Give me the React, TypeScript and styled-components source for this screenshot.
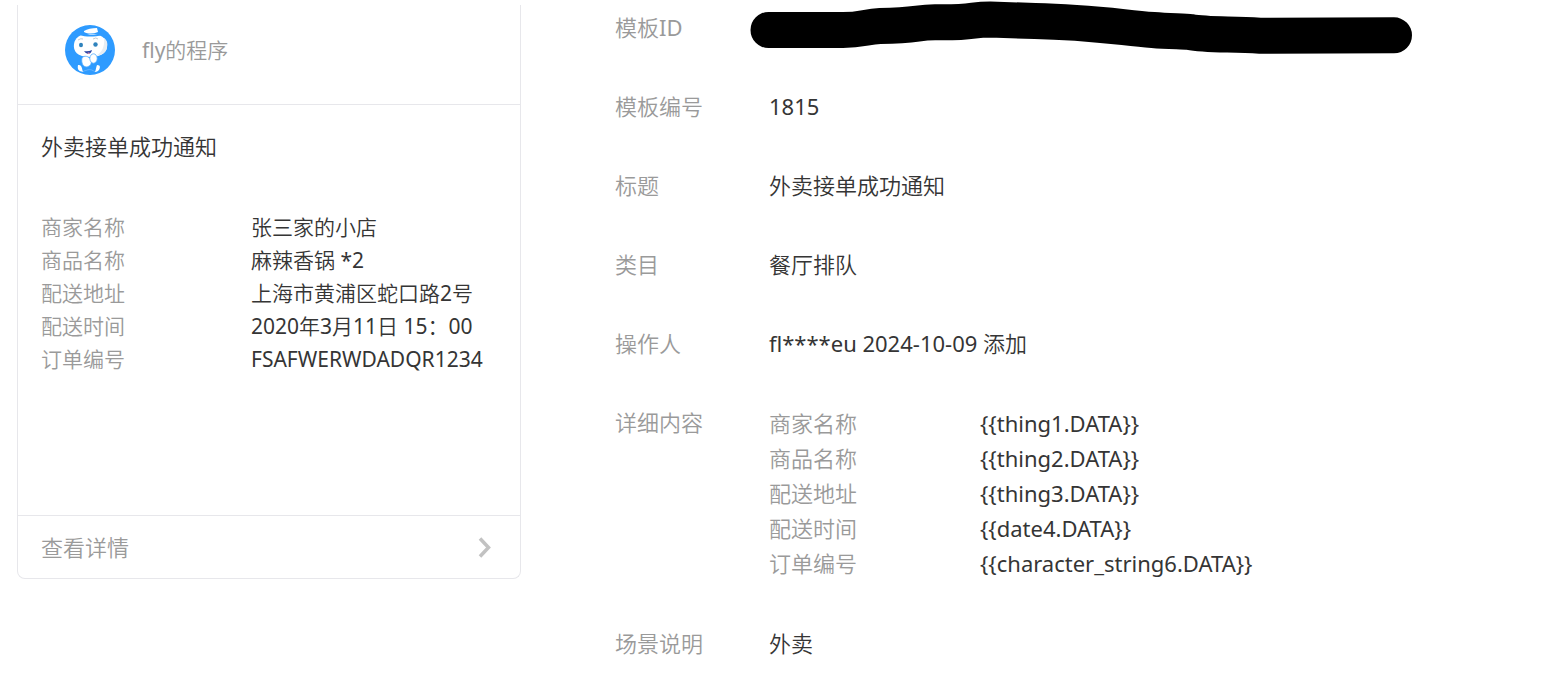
import React from "react";
import styled, { createGlobalStyle } from "styled-components";

const GlobalStyle = createGlobalStyle`
  *, *::before, *::after { box-sizing: border-box; }
  body {
    margin: 0;
    background: #fff;
    color: #353535;
    font-family: "Noto Sans", "Noto Sans CJK SC DemiLight", "Noto Sans CJK SC", sans-serif;
    font-weight: 400;
    font-size: 22px;
    line-height: 35px;
  }
`;

const Page = styled.main`
  display: flex;
  align-items: flex-start;
  gap: 94px;
  padding: 5px 17px 24px;
`;

const Card = styled.section`
  flex: 0 1 504px;
  display: flex;
  flex-direction: column;
  min-height: 574px;
  border: 1px solid #e7e7eb;
  border-top: 0;
  border-radius: 0 0 8px 8px;
`;

const CardHeader = styled.header`
  display: flex;
  align-items: center;
  gap: 27px;
  padding: 20px 47px 29px;
  border-bottom: 1px solid #e7e7eb;
  color: #9a9a9a;
  font-size: 21px;
`;

const Avatar = styled.svg`
  flex: none;
  width: 50px;
  height: 50px;
`;

const CardBody = styled.div`
  flex: 1;
  padding: 24px 23px;
`;

const CardTitle = styled.h2`
  margin: 0 0 47px;
  font-size: 22px;
  font-weight: inherit;
`;

const FieldList = styled.dl<{ $labelWidth: number; $compact?: boolean }>`
  display: grid;
  grid-template-columns: ${(p) => p.$labelWidth}px 1fr;
  margin: 0;
  padding: ${(p) => (p.$compact ? 0 : 1)}px 0;
  font-size: ${(p) => (p.$compact ? 21 : 22)}px;
  line-height: ${(p) => (p.$compact ? 33 : 35)}px;
`;

const Label = styled.dt`
  color: #9a9a9a;
`;

const Value = styled.dd`
  position: relative;
  margin: 0;
  white-space: nowrap;
`;

const CardLink = styled.a`
  display: flex;
  align-items: center;
  justify-content: space-between;
  height: 63px;
  padding: 0 28px 0 23px;
  border-top: 1px solid #e7e7eb;
  color: #9a9a9a;
  text-decoration: none;
`;

const Arrow = styled.svg`
  width: 14px;
  height: 22px;
`;

const Details = styled.dl`
  flex: 1;
  display: grid;
  grid-template-columns: 154px 1fr;
  row-gap: 44px;
  align-content: start;
  margin: 0;
  padding-top: 5px;
`;

const Redaction = styled.svg`
  position: absolute;
  left: -19px;
  top: -10px;
  width: 664px;
  height: 56px;
`;

const cardFields = [
  ["商家名称", "张三家的小店"],
  ["商品名称", "麻辣香锅 *2"],
  ["配送地址", "上海市黄浦区蛇口路2号"],
  ["配送时间", "2020年3月11日 15：00"],
  ["订单编号", "FSAFWERWDADQR1234"],
];

const templateFields = [
  ["商家名称", "{{thing1.DATA}}"],
  ["商品名称", "{{thing2.DATA}}"],
  ["配送地址", "{{thing3.DATA}}"],
  ["配送时间", "{{date4.DATA}}"],
  ["订单编号", "{{character_string6.DATA}}"],
];

const summary = [
  ["模板编号", "1815"],
  ["标题", "外卖接单成功通知"],
  ["类目", "餐厅排队"],
  ["操作人", "fl****eu 2024-10-09 添加"],
];

function Fields({ rows }: { rows: string[][] }) {
  return (
    <>
      {rows.map(([label, value]) => (
        <React.Fragment key={label}>
          <Label>{label}</Label>
          <Value>{value}</Value>
        </React.Fragment>
      ))}
    </>
  );
}

function Mascot() {
  return (
    <Avatar viewBox="0 0 50 50" aria-hidden="true">
      <circle cx="25" cy="25" r="25" fill="#2e9bff" />
      <path d="M9 19C10 13 14 9 25 9s16 4 17 10c1 7-4 13-17 13S8 26 9 19Z" fill="#fff" />
      <path d="M39 13c3 2 4 5 3 9 0 4-4 8-11 9 6-4 9-9 8-18Z" fill="#e6edf3" />
      <path d="M15 6c5 4 16 5 22 2v2c-7 2-17 2-22 0Z" fill="#2e9bff" />
      <path d="M19 6c3-2 8-3 13-3l1 4c-5 2-10 2-14 0Z" fill="#fff" />
      <path d="M13 15q3-2 5-1M28 14q3-2 5 0" fill="none" stroke="#c5cbd1" />
      <ellipse cx="16" cy="20" rx="2" ry="2.2" fill="#2f83bd" />
      <ellipse cx="30.5" cy="19.5" rx="2.2" ry="2.2" fill="#2f83bd" />
      <path d="M19 26q4 1 8-1-1 4-4 4-3-1-4-3Z" fill="#2944a5" />
      <path d="M22 28q2-1 3 0l-1 1Z" fill="#ff9bad" />
      <path d="M17 33c2-3 7-2 9 2 1 4-1 6-4 7-4 0-6-4-5-9Z" fill="#fff" stroke="#56adff" strokeWidth=".8" />
      <ellipse cx="28.5" cy="33.500" rx="3.700" ry="4.700" fill="#fff" stroke="#56adff" strokeWidth=".8" />
      <path d="M14 40c3 0 3 4 4 7-4-1-6-2-5-7ZM32 40c4 0 3 3 2 5-2 2-4 2-4 2 1-2 1-5 2-7Z" fill="#fff" />
      <path d="M18 47c1-2 3-1 4-2 3-1 6 0 8 2" fill="none" stroke="#76baff" strokeWidth=".7" />
    </Avatar>
  );
}

export default function App() {
  return (
    <>
      <GlobalStyle />
      <Page>
        <Card>
          <CardHeader>
            <Mascot />
            <span>fly的程序</span>
          </CardHeader>
          <CardBody>
            <CardTitle>外卖接单成功通知</CardTitle>
            <FieldList $labelWidth={210} $compact>
              <Fields rows={cardFields} />
            </FieldList>
          </CardBody>
          <CardLink href="#">
            <span>查看详情</span>
            <Arrow viewBox="0 0 14 22" aria-hidden="true">
              <path d="M2 2.500L10.500 11.500L2 20.500" fill="none" stroke="#c2c2c2" strokeWidth="3.500" />
            </Arrow>
          </CardLink>
        </Card>

        <Details>
          <Label>模板ID</Label>
          <Value>
            <Redaction viewBox="750 0 664 56" aria-hidden="true">
              <path
                d="M768.500 30H843C862 30 866 26.500 880 26C920 25 915 22.500 935 22.300C975 23 970 19.500 990 19.500L1035 21C1085 22 1110 26 1153 30C1170 31.500 1184 31 1190 32C1205 35 1225 34 1260 35.700C1290 36 1320 35.300 1394 35.300"
                fill="none"
                stroke="#000"
                strokeWidth="36"
                strokeLinecap="round"
                strokeLinejoin="round"
              />
            </Redaction>
          </Value>
          <Fields rows={summary} />
          <Label>详细内容</Label>
          <Value>
            <FieldList $labelWidth={211}>
              <Fields rows={templateFields} />
            </FieldList>
          </Value>
          <Label>场景说明</Label>
          <Value>外卖</Value>
        </Details>
      </Page>
    </>
  );
}
